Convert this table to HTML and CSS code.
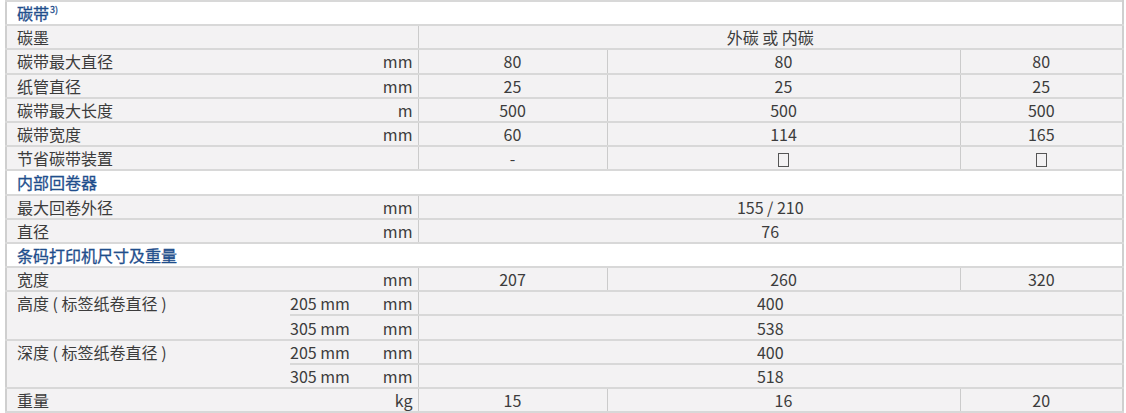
FILE: index.html
```html
<!DOCTYPE html>
<html lang="zh-CN">
<head>
<meta charset="utf-8">
<title>规格</title>
<link rel="stylesheet" href="styles.css">
</head>
<body>
<table class="spec">
  <colgroup>
    <col class="c-a"><col class="c-b"><col class="c-u"><col class="c-1"><col class="c-2"><col class="c-3">
  </colgroup>
  <tbody>
    <tr class="sec"><td colspan="6" class="first last">碳带<sup>3)</sup></td></tr>
    <tr><td colspan="3" class="lbl first">碳墨</td><td colspan="3" class="val last">外碳 或 内碳</td></tr>
    <tr><td colspan="2" class="lbl first">碳带最大直径</td><td class="unit">mm</td><td class="val">80</td><td class="val">80</td><td class="val last">80</td></tr>
    <tr><td colspan="2" class="lbl first">纸管直径</td><td class="unit">mm</td><td class="val">25</td><td class="val">25</td><td class="val last">25</td></tr>
    <tr><td colspan="2" class="lbl first">碳带最大长度</td><td class="unit">m</td><td class="val">500</td><td class="val">500</td><td class="val last">500</td></tr>
    <tr><td colspan="2" class="lbl first">碳带宽度</td><td class="unit">mm</td><td class="val">60</td><td class="val">114</td><td class="val last">165</td></tr>
    <tr><td colspan="3" class="lbl first">节省碳带装置</td><td class="val">-</td><td class="val"><span class="box"></span></td><td class="val last"><span class="box"></span></td></tr>
    <tr class="sec"><td colspan="6" class="first last">内部回卷器</td></tr>
    <tr><td colspan="2" class="lbl first">最大回卷外径</td><td class="unit">mm</td><td colspan="3" class="val last">155 / 210</td></tr>
    <tr><td colspan="2" class="lbl first">直径</td><td class="unit">mm</td><td colspan="3" class="val last">76</td></tr>
    <tr class="sec"><td colspan="6" class="first last">条码打印机尺寸及重量</td></tr>
    <tr><td colspan="2" class="lbl first">宽度</td><td class="unit">mm</td><td class="val">207</td><td class="val">260</td><td class="val last">320</td></tr>
    <tr><td rowspan="2" class="lbl top first">高度 ( 标签纸卷直径 )</td><td class="sub">205 mm</td><td class="unit">mm</td><td colspan="3" class="val last">400</td></tr>
    <tr><td class="sub">305 mm</td><td class="unit">mm</td><td colspan="3" class="val last">538</td></tr>
    <tr><td rowspan="2" class="lbl top first">深度 ( 标签纸卷直径 )</td><td class="sub">205 mm</td><td class="unit">mm</td><td colspan="3" class="val last">400</td></tr>
    <tr><td class="sub">305 mm</td><td class="unit">mm</td><td colspan="3" class="val last">518</td></tr>
    <tr><td colspan="2" class="lbl first">重量</td><td class="unit">kg</td><td class="val">15</td><td class="val">16</td><td class="val last">20</td></tr>
  </tbody>
</table>
</body>
</html>
```
FILE: styles.css
```css
html, body {
  margin: 0;
  padding: 0;
  background: #ffffff;
}
body {
  font-family: "Noto Sans CJK SC", "Noto Sans", sans-serif;
  font-size: 16px;
  color: #3c3c3c;
}
.spec {
  margin: 0 0 0 5px;
  width: 1117px;
  border-collapse: collapse;
  table-layout: fixed;
}
.c-a { width: 284px; }
.c-b { width: 81px; }
.c-u { width: 47px; }
.c-1 { width: 189px; }
.c-2 { width: 353px; }
.c-3 { width: 163px; }

.spec td {
  height: 22.2px;
  padding: 0;
  line-height: 22px;
  background: #f3f2f3;
  border-top: 2px solid #d8d8d8;
  border-bottom: 2px solid #d8d8d8;
  white-space: nowrap;
  vertical-align: middle;
}
.spec td.first {
  border-left: 2px solid #cfcfcf;
}
.spec td.last {
  border-right: 2px solid #cfcfcf;
}
.spec .sec td {
  background: #ffffff;
  color: #1f4e8c;
  font-weight: 400;
  padding-left: 10px;
  -webkit-text-stroke: 0.3px #1f4e8c;
}
.spec .sec sup {
  font-size: 9px;
  line-height: 0;
  vertical-align: 7px;
  margin-left: 1px;
}
.lbl {
  padding-left: 10px !important;
}
.lbl.top {
  vertical-align: top;
}
.sub {
  text-align: left;
}
.unit {
  text-align: right;
  padding-right: 5px !important;
}
.val {
  text-align: center;
  border-left: 1px solid #cbcbcb;
}
.box {
  display: inline-block;
  width: 11px;
  height: 14px;
  border: 1px solid #555;
  box-sizing: border-box;
  vertical-align: -2px;
}
```
